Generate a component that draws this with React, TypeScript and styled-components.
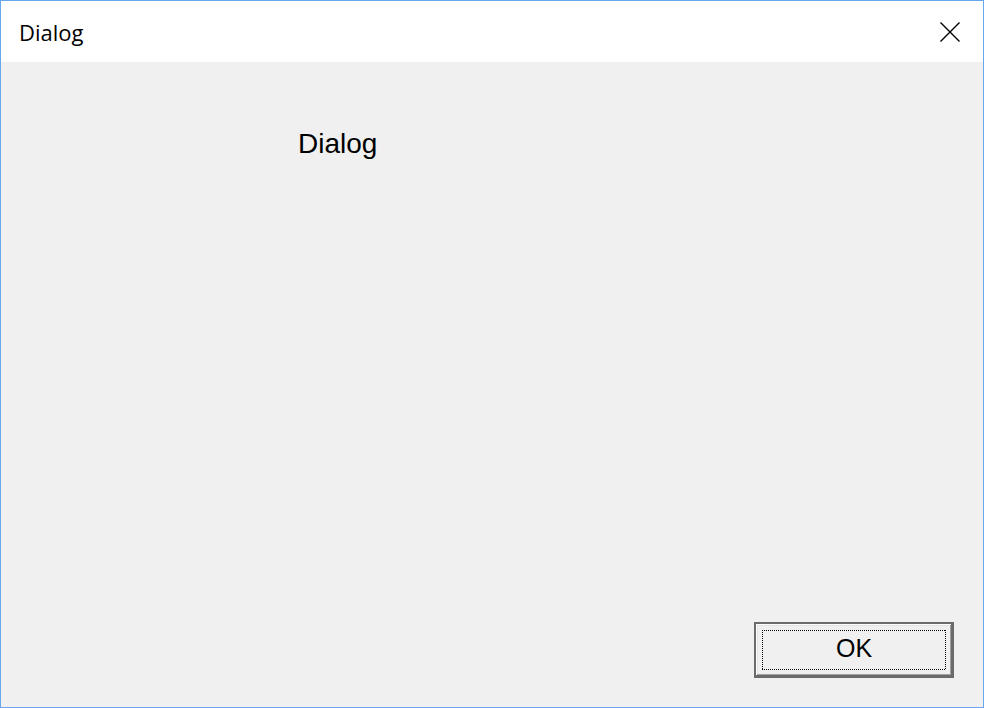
import styled, { createGlobalStyle } from "styled-components";

const GlobalStyle = createGlobalStyle`
  html, body {
    margin: 0;
    padding: 0;
    background: #f0f0f0;
  }
  * {
    box-sizing: border-box;
  }
`;

const App = () => {
  return (
    <>
      <GlobalStyle />
      <Window>
        <TitleBar>
          <TitleText>Dialog</TitleText>
          <CloseButton aria-label="Close">
            <svg width="20" height="20" viewBox="0 0 20 20">
              <path d="M0.5 0.5 L19.5 19.5 M19.5 0.5 L0.5 19.5" stroke="#000" strokeWidth="1.4" fill="none" />
            </svg>
          </CloseButton>
        </TitleBar>

        <Body>
          <Label>Dialog</Label>
          <Footer>
            <DefaultButton>
              <FocusRect>OK</FocusRect>
            </DefaultButton>
          </Footer>
        </Body>
      </Window>
    </>
  );
};

export default App;

const Window = styled.div`
  width: 984px;
  height: 708px;
  display: flex;
  flex-direction: column;
  border: 1px solid #6aa6f0;
  background-color: #f0f0f0;
`;

const TitleBar = styled.div`
  height: 61px;
  flex-shrink: 0;
  display: flex;
  align-items: center;
  justify-content: space-between;
  padding: 0 23px 0 18px;
  background-color: #ffffff;
`;

const TitleText = styled.span`
  font-family: "Open Sans", "Noto Sans", sans-serif;
  font-size: 22px;
  color: #000;
  line-height: 1;
  margin-top: 1px;
`;

const CloseButton = styled.div`
  width: 21px;
  height: 21px;
  display: flex;
  align-items: center;
  justify-content: center;
  margin-top: 1px;
`;

const Body = styled.div`
  flex: 1;
  display: flex;
  flex-direction: column;
  padding: 66px 29px 29px 297px;
`;

const Label = styled.div`
  font-family: "Liberation Sans", Arial, sans-serif;
  font-size: 28px;
  line-height: 31px;
  color: #000;
`;

const Footer = styled.div`
  margin-top: auto;
  display: flex;
  justify-content: flex-end;
`;

const DefaultButton = styled.div`
  width: 200px;
  height: 56px;
  display: flex;
  padding: 6px 5px 5px 6px;
  background-color: #f0f0f0;
  border: 2px solid #6b6b6b;
  border-right-width: 3px;
  border-bottom-width: 3px;
  box-shadow:
    inset 1px 1px #ffffff,
    inset -1px -1px #a0a0a0,
    inset 2px 2px #e3e3e3;
`;

const dotsX = "repeating-linear-gradient(90deg, #000 0 1px, transparent 1px 2px)";
const dotsY = "repeating-linear-gradient(180deg, #000 0 1px, transparent 1px 2px)";

const FocusRect = styled.div`
  flex: 1;
  display: flex;
  align-items: center;
  justify-content: center;
  padding-bottom: 3px;
  background:
    ${dotsX} left top / 100% 1px no-repeat,
    ${dotsX} left bottom / 100% 1px no-repeat,
    ${dotsY} left top / 1px 100% no-repeat,
    ${dotsY} right top / 1px 100% no-repeat;
  font-family: "Liberation Sans", Arial, sans-serif;
  font-size: 25px;
  color: #000;
`;
